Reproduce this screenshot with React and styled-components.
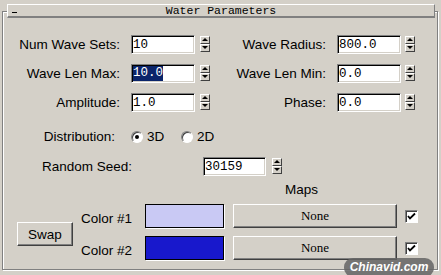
import { Fragment } from "react";
import styled, { createGlobalStyle } from "styled-components";

const GlobalStyle = createGlobalStyle`
  html, body {
    margin: 0;
    padding: 0;
    background: #d4d0c8;
  }
  body {
    font-family: "Liberation Sans", Arial, sans-serif;
    font-size: 13.5px;
    color: #000;
  }
`;

const Page = styled.div`
  position: relative;
  width: 441px;
  height: 275px;
  padding: 11px 3px 0 2px;
  box-sizing: border-box;
  overflow: hidden;
`;

const Frame = styled.div`
  height: 259px;
  border: 1px solid #808080;
  box-shadow: inset 1px 1px #fff, 1px 1px #fff;
  box-sizing: border-box;
`;

const Header = styled.div`
  display: grid;
  grid-template-columns: 20px 1fr 20px;
  align-items: center;
  height: 14px;
  margin: -8px 2px 0 4px;
  box-sizing: border-box;
  border-top: 1px solid #fff;
  border-left: 1px solid #fff;
  border-right: 1px solid #808080;
  border-bottom: 2px solid #808080;
  background: #d4d0c8;
  font-family: "Liberation Mono", "DejaVu Sans Mono", monospace;
  font-size: 11.5px;
  line-height: 11px;
`;

const Collapse = styled.span`
  width: 5px;
  height: 1px;
  margin: 3px 0 0 4px;
  background: #000;
`;

const Title = styled.span`
  text-align: center;
`;

const ParamGrid = styled.div`
  display: grid;
  grid-template-columns: 128px 64px 15px 127px 64px 14px;
  grid-auto-rows: 19px;
  row-gap: 10px;
  align-items: center;
  margin-top: 17px;
`;

const Label = styled.span`
  text-align: right;
  padding-right: ${({ $pad = 11 }) => $pad}px;
  white-space: nowrap;
`;

const Field = styled.div`
  width: ${({ $w = 64 }) => $w}px;
  height: 19px;
  box-sizing: border-box;
  display: flex;
  align-items: center;
  padding-left: 1px;
  background: #fff;
  border: 1px solid;
  border-color: #808080 #fff #fff #808080;
  box-shadow: inset 1px 1px #000, inset -1px -1px #d4d0c8;
  font-family: "Liberation Mono", "DejaVu Sans Mono", monospace;
  font-size: 12.5px;
  overflow: hidden;
`;

const Selected = styled.span`
  background: #0a246a;
  color: #fff;
  line-height: 15px;
`;

const SpinBox = styled.div`
  justify-self: end;
  display: flex;
  flex-direction: column;
  width: 10px;
  height: 16px;
  margin-top: -2px;
  margin-left: ${({ $gap = 0 }) => $gap}px;
`;

const SpinHalf = styled.div`
  flex: 1;
  display: flex;
  align-items: center;
  justify-content: center;
  box-sizing: border-box;
  background: #d4d0c8;
  border: 1px solid;
  border-color: #fff #404040 #404040 #fff;
  &::after {
    content: "";
    border-left: 3px solid transparent;
    border-right: 3px solid transparent;
    ${({ $down }) =>
      $down ? "border-top: 3px solid #000;" : "border-bottom: 3px solid #000;"}
  }
`;

const Spinner = ({ gap }) => (
  <SpinBox $gap={gap}>
    <SpinHalf />
    <SpinHalf $down />
  </SpinBox>
);

const RadioRow = styled.div`
  display: grid;
  grid-template-columns: 128px auto;
  align-items: center;
  height: 14px;
  margin-top: 17px;
`;

const RadioGroup = styled.div`
  display: flex;
  align-items: center;
`;

const RadioItem = styled.label`
  display: flex;
  align-items: center;
  gap: 4px;
  width: 50px;
`;

const RadioDot = styled.span`
  width: 12px;
  height: 12px;
  box-sizing: border-box;
  border-radius: 50%;
  background: #fff;
  border: 1px solid;
  border-color: #808080 #fff #fff #808080;
  box-shadow: inset 1px 1px #404040;
  display: flex;
  align-items: center;
  justify-content: center;
  &::after {
    content: "";
    width: 4px;
    height: 4px;
    border-radius: 50%;
    background: ${({ $on }) => ($on ? "#000" : "transparent")};
  }
`;

const SeedRow = styled.div`
  display: flex;
  align-items: center;
  height: 19px;
  margin-top: 14px;
`;

const SeedLabel = styled.span`
  width: 129px;
  text-align: right;
  margin-right: 71px;
`;

const MapsTitle = styled.div`
  height: 15px;
  line-height: 15px;
  margin-top: 6px;
  padding-left: 282px;
`;

const ColorSection = styled.div`
  display: flex;
  align-items: center;
  margin-top: 7px;
  padding-left: 14px;
`;

const RaisedButton = styled.div`
  box-sizing: border-box;
  display: flex;
  align-items: center;
  justify-content: center;
  background: #d4d0c8;
  border: 1px solid;
  border-color: #fff #404040 #404040 #fff;
  box-shadow: inset -1px -1px #808080;
`;

const SwapButton = styled(RaisedButton)`
  width: 56px;
  height: 24px;
  margin-top: 4px;
  margin-right: 8px;
`;

const ColorGrid = styled.div`
  display: grid;
  grid-template-columns: 64px 88px 172px 13px;
  grid-auto-rows: 24px;
  row-gap: 8px;
  align-items: center;
`;

const ColorLabel = styled.span`
  padding-top: 4px;
`;

const Swatch = styled.div`
  width: 79px;
  height: 24px;
  box-sizing: border-box;
  background: ${({ $color }) => $color};
  border: 1px solid #000;
  box-shadow: 1px 1px #fff;
`;

const MapButton = styled(RaisedButton)`
  width: 164px;
  height: 24px;
  font-family: "Liberation Serif", "Times New Roman", serif;
  font-size: 13px;
`;

const CheckBox = styled.div`
  width: 13px;
  height: 13px;
  box-sizing: border-box;
  background: #fff;
  border: 1px solid;
  border-color: #808080 #fff #fff #808080;
  box-shadow: inset 1px 1px #404040;
  display: flex;
  align-items: center;
  justify-content: center;
`;

const Watermark = styled.div`
  position: absolute;
  right: 7px;
  bottom: -2px;
  width: 90px;
  height: 19px;
  border-radius: 9px;
  background: rgba(100, 100, 100, 0.85);
  color: #fff;
  font-weight: bold;
  font-style: italic;
  font-size: 12px;
  display: flex;
  align-items: center;
  justify-content: center;
  padding-bottom: 2px;
  box-sizing: border-box;
`;

const Check = () => (
  <svg width="9" height="9" viewBox="0 0 9 9">
    <polyline points="1,4 3,6.5 8,1.5" fill="none" stroke="#000" strokeWidth="1.8" />
  </svg>
);

const params = [
  ["Num Wave Sets:", "10", "Wave Radius:", "800.0"],
  ["Wave Len Max:", "10.0", "Wave Len Min:", "0.0"],
  ["Amplitude:", "1.0", "Phase:", "0.0"],
];

const maps = [
  ["Color #1", "#c9c9f4"],
  ["Color #2", "#1818cc"],
];

export default function App() {
  return (
    <Page>
      <GlobalStyle />
      <Frame>
        <Header>
          <Collapse />
          <Title>Water Parameters</Title>
          <span />
        </Header>

        <ParamGrid>
          {params.map(([l1, v1, l2, v2], i) => (
            <Fragment key={l1}>
              <Label>{l1}</Label>
              <Field>{i === 1 ? <Selected>{v1}</Selected> : v1}</Field>
              <Spinner />
              <Label>{l2}</Label>
              <Field>{v2}</Field>
              <Spinner />
            </Fragment>
          ))}
        </ParamGrid>

        <RadioRow>
          <Label $pad={16}>Distribution:</Label>
          <RadioGroup>
            <RadioItem>
              <RadioDot $on />
              3D
            </RadioItem>
            <RadioItem>
              <RadioDot />
              2D
            </RadioItem>
          </RadioGroup>
        </RadioRow>

        <SeedRow>
          <SeedLabel>Random Seed:</SeedLabel>
          <Field $w={63}>30159</Field>
          <Spinner gap={6} />
        </SeedRow>

        <MapsTitle>Maps</MapsTitle>

        <ColorSection>
          <SwapButton>Swap</SwapButton>
          <ColorGrid>
            {maps.map(([label, color]) => (
              <Fragment key={label}>
                <ColorLabel>{label}</ColorLabel>
                <Swatch $color={color} />
                <MapButton>None</MapButton>
                <CheckBox>
                  <Check />
                </CheckBox>
              </Fragment>
            ))}
          </ColorGrid>
        </ColorSection>
      </Frame>
      <Watermark>Chinavid.com</Watermark>
    </Page>
  );
}
